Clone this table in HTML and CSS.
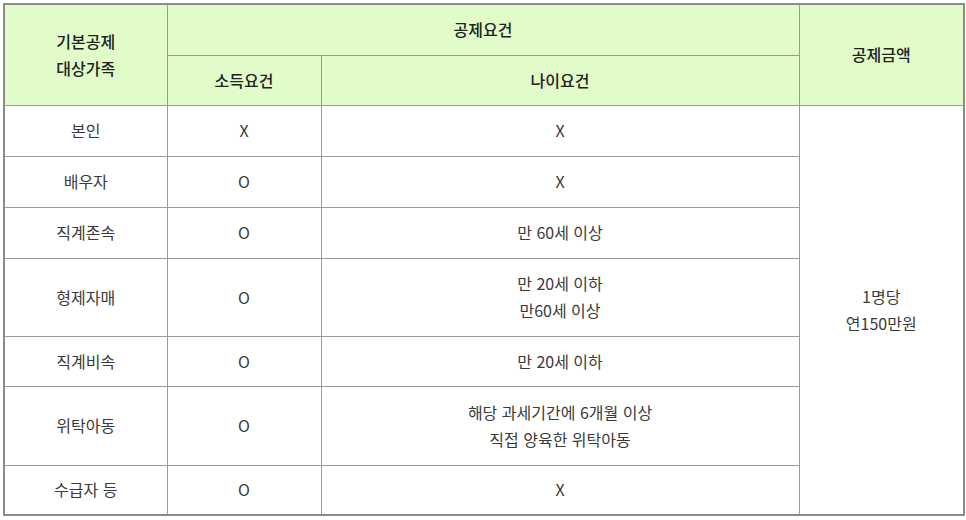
FILE: index.html
```html
<!DOCTYPE html>
<html lang="ko">
<head>
<meta charset="utf-8">
<link rel="stylesheet" href="styles.css">
</head>
<body>
<table class="deduct">
  <colgroup>
    <col class="c1"><col class="c2"><col class="c3"><col class="c4">
  </colgroup>
  <thead>
    <tr class="h1">
      <th rowspan="2">기본공제<br>대상가족</th>
      <th colspan="2">공제요건</th>
      <th rowspan="2">공제금액</th>
    </tr>
    <tr class="h2">
      <th>소득요건</th>
      <th>나이요건</th>
    </tr>
  </thead>
  <tbody>
    <tr class="r1"><td>본인</td><td>X</td><td>X</td><td rowspan="7" class="amount">1명당<br>연150만원</td></tr>
    <tr class="r1"><td>배우자</td><td>O</td><td>X</td></tr>
    <tr class="r1"><td>직계존속</td><td>O</td><td>만 60세 이상</td></tr>
    <tr class="r2"><td>형제자매</td><td>O</td><td>만 20세 이하<br>만60세 이상</td></tr>
    <tr class="r3"><td>직계비속</td><td>O</td><td>만 20세 이하</td></tr>
    <tr class="r4"><td>위탁아동</td><td>O</td><td>해당 과세기간에 6개월 이상<br>직접 양육한 위탁아동</td></tr>
    <tr class="r3"><td>수급자 등</td><td>O</td><td>X</td></tr>
  </tbody>
</table>
</body>
</html>
```
FILE: styles.css
```css
html, body {
  margin: 0;
  padding: 0;
  background: #ffffff;
}
body {
  padding: 3px;
  font-family: "Noto Sans CJK KR", "Noto Sans", sans-serif;
  font-size: 16px;
  color: #3a3a3a;
}
.deduct {
  border-collapse: collapse;
  width: 961px;
  table-layout: fixed;
  border: 2px solid #8a8a8a;
}
.c1 { width: 163px; }
.c2 { width: 154px; }
.c3 { width: 478px; }
.c4 { width: 165px; }
.deduct th,
.deduct td {
  border: 1px solid #9a9a9a;
  text-align: center;
  vertical-align: middle;
  padding: 0;
  line-height: 27px;
}
.deduct th {
  background: #e1fcc8;
  font-weight: 500;
  color: #222222;
}
.h1 { height: 51px; }
.h2 { height: 50px; }
.r1 { height: 51px; }
.r2 { height: 78px; }
.r3 { height: 50px; }
.r4 { height: 79px; }
.amount {
  vertical-align: middle;
}
```
